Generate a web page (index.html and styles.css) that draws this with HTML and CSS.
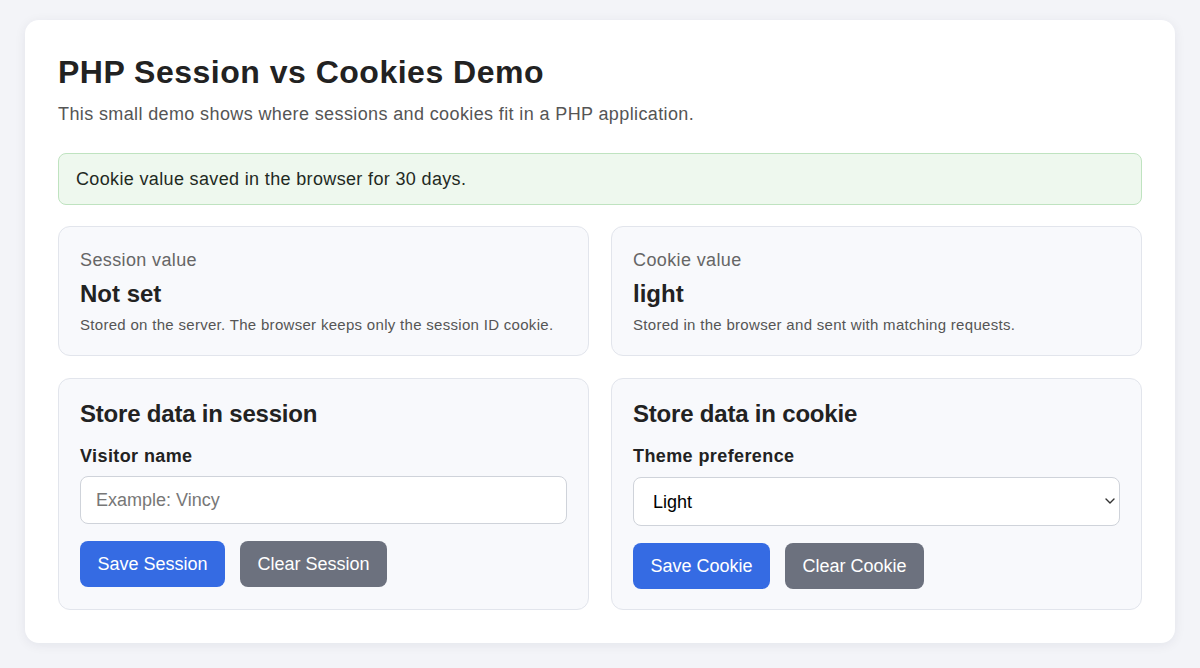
FILE: index.html
```html
<!DOCTYPE html>
<html lang="en">
<head>
<meta charset="utf-8">
<title>PHP Session vs Cookies Demo</title>
<link rel="stylesheet" href="styles.css">
</head>
<body>
<main class="container">
  <h1 class="title">PHP Session vs Cookies Demo</h1>
  <p class="subtitle">This small demo shows where sessions and cookies fit in a PHP application.</p>
  <div class="alert">Cookie value saved in the browser for 30 days.</div>
  <div class="grid">
    <section class="card">
      <div class="card-label">Session value</div>
      <div class="card-value">Not set</div>
      <div class="card-desc">Stored on the server. The browser keeps only the session ID cookie.</div>
    </section>
    <section class="card">
      <div class="card-label">Cookie value</div>
      <div class="card-value">light</div>
      <div class="card-desc">Stored in the browser and sent with matching requests.</div>
    </section>
    <form class="card form-card">
      <h2 class="card-title">Store data in session</h2>
      <label class="field-label" for="visitor">Visitor name</label>
      <input class="field" id="visitor" type="text" placeholder="Example: Vincy">
      <div class="actions">
        <button type="button" class="btn btn-primary">Save Session</button>
        <button type="button" class="btn btn-secondary">Clear Session</button>
      </div>
    </form>
    <form class="card form-card">
      <h2 class="card-title">Store data in cookie</h2>
      <label class="field-label" for="theme">Theme preference</label>
      <div class="select-wrap">
        <select class="field select" id="theme">
          <option selected>Light</option>
          <option>Dark</option>
        </select>
        <svg class="chevron" width="10" height="6" viewBox="0 0 10 6" aria-hidden="true">
          <path d="M1 1 L5 5 L9 1" fill="none" stroke="#333" stroke-width="1.4" stroke-linecap="round" stroke-linejoin="round"/>
        </svg>
      </div>
      <div class="actions">
        <button type="button" class="btn btn-primary">Save Cookie</button>
        <button type="button" class="btn btn-secondary">Clear Cookie</button>
      </div>
    </form>
  </div>
</main>
</body>
</html>
```
FILE: styles.css
```css
* { box-sizing: border-box; }
html, body { margin: 0; }
body {
  background: #f3f4f8;
  font-family: "Liberation Sans", Arial, Helvetica, sans-serif;
  color: #222;
  padding: 20px 25px 25px;
}
.container {
  background: #fff;
  border-radius: 14px;
  padding: 33px 33px 33px;
  box-shadow: 0 2px 12px rgba(20, 30, 60, 0.07);
}
.title {
  margin: 0;
  font-size: 32px;
  line-height: 38px;
  font-weight: 700;
  letter-spacing: 0.5px;
  color: #222;
}
.subtitle {
  margin: 12px 0 0;
  font-size: 18px;
  line-height: 22px;
  letter-spacing: 0.38px;
  color: #555;
}
.alert {
  margin-top: 28px;
  background: #eef8ee;
  border: 1px solid #bfe3c0;
  border-radius: 8px;
  padding: 14px 17px;
  font-size: 18px;
  line-height: 22px;
  letter-spacing: 0.35px;
  color: #1f2a1f;
}
.grid {
  margin-top: 21px;
  display: grid;
  grid-template-columns: 1fr 1fr;
  gap: 22px;
}
.card {
  background: #f8f9fc;
  border: 1px solid #e2e5ec;
  border-radius: 12px;
  padding: 22px 21px 21px;
  margin: 0;
  display: flex;
  flex-direction: column;
}
.form-card {
  padding-top: 20px;
  padding-bottom: 20px;
}
.card-label {
  font-size: 18px;
  line-height: 22px;
  letter-spacing: 0.38px;
  color: #666;
}
.card-value {
  margin-top: 8px;
  font-size: 24px;
  line-height: 29px;
  font-weight: 700;
  color: #222;
}
.card-desc {
  margin-top: 8px;
  font-size: 15px;
  line-height: 18px;
  letter-spacing: 0.3px;
  color: #555;
}
.card-title {
  margin: 0;
  font-size: 24px;
  line-height: 29px;
  font-weight: 700;
  letter-spacing: -0.2px;
  color: #222;
}
.field-label {
  margin-top: 17px;
  font-size: 18px;
  line-height: 22px;
  font-weight: 700;
  letter-spacing: 0.4px;
  color: #222;
}
.field {
  margin-top: 9px;
  height: 48px;
  width: 100%;
  border: 1px solid #cfd3da;
  border-radius: 8px;
  background: #fff;
  padding: 0 15px;
  font-family: inherit;
  font-size: 18px;
  color: #111;
}
.field::placeholder { color: #777; }
.select-wrap {
  position: relative;
  margin-top: 10px;
}
.select {
  display: block;
  margin-top: 0;
  height: 49px;
  padding: 0 30px 0 19px;
  color: #000;
  appearance: none;
  -webkit-appearance: none;
}
.chevron {
  position: absolute;
  right: 5px;
  top: 21px;
  pointer-events: none;
}
.actions {
  margin-top: 17px;
  display: flex;
  gap: 15px;
}
.btn {
  border: none;
  border-radius: 8px;
  padding: 12px 17.5px;
  font-family: inherit;
  font-size: 18px;
  line-height: 22px;
  color: #fff;
  cursor: pointer;
}
.btn-primary { background: #356be3; }
.btn-secondary { background: #6c717e; }
```
